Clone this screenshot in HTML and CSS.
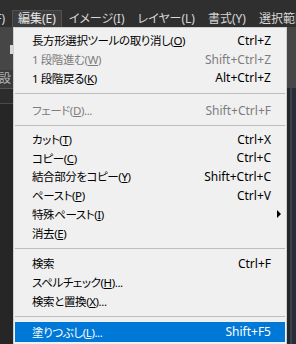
FILE: index.html
```html
<!DOCTYPE html>
<html lang="ja">
<head>
<meta charset="utf-8">
<link rel="stylesheet" href="styles.css">
</head>
<body>
<div class="app">
  <div class="menubar">
    <div class="bar-items">
      <span class="bar-item">ファイル(F)</span>
      <span class="bar-item active">編集(E)</span>
      <span class="bar-item">イメージ(I)</span>
      <span class="bar-item">レイヤー(L)</span>
      <span class="bar-item">書式(Y)</span>
      <span class="bar-item">選択範囲(S)</span>
    </div>
  </div>
  <div class="workspace">
    <div class="side-left">
      <div class="opt-strip"><span class="knob"></span></div>
      <div class="opt-label">設</div>
      <div class="ruler"></div>
    </div>
    <div class="side-right">
      <div class="opt-strip"></div>
      <div class="doc"></div>
    </div>
  </div>

  <div class="menu">
    <div class="item"><span class="label">長方形選択ツールの取り消し(<u>O</u>)</span><span class="key">Ctrl+Z</span></div>
    <div class="item disabled"><span class="label">1 段階進む(<u>W</u>)</span><span class="key">Shift+Ctrl+Z</span></div>
    <div class="item"><span class="label">1 段階戻る(<u>K</u>)</span><span class="key">Alt+Ctrl+Z</span></div>
    <div class="sep sep-a"></div>
    <div class="item disabled"><span class="label">フェード(<u>D</u>)...</span><span class="key">Shift+Ctrl+F</span></div>
    <div class="sep sep-b"></div>
    <div class="item"><span class="label">カット(<u>T</u>)</span><span class="key">Ctrl+X</span></div>
    <div class="item"><span class="label">コピー(<u>C</u>)</span><span class="key">Ctrl+C</span></div>
    <div class="item"><span class="label">結合部分をコピー(<u>Y</u>)</span><span class="key">Shift+Ctrl+C</span></div>
    <div class="item"><span class="label">ペースト(<u>P</u>)</span><span class="key">Ctrl+V</span></div>
    <div class="item"><span class="label">特殊ペースト(<u>I</u>)</span><span class="arrow"></span></div>
    <div class="item"><span class="label">消去(<u>E</u>)</span></div>
    <div class="sep sep-c"></div>
    <div class="item"><span class="label">検索</span><span class="key">Ctrl+F</span></div>
    <div class="item"><span class="label">スペルチェック(<u>H</u>)...</span></div>
    <div class="item"><span class="label">検索と置換(<u>X</u>)...</span></div>
    <div class="sep sep-d"></div>
    <div class="item selected"><span class="label">塗りつぶし(<u>L</u>)...</span><span class="key">Shift+F5</span></div>
  </div>
</div>
</body>
</html>
```

FILE: styles.css
```css
html, body {
  margin: 0;
  padding: 0;
  background: #262626;
}
body {
  width: 296px;
  height: 344px;
  overflow: hidden;
  font-family: "Noto Sans", "Noto Sans CJK JP", sans-serif;
  font-size: 12px;
  font-feature-settings: "palt";
}
.app {
  position: relative;
  width: 296px;
  height: 344px;
  display: flex;
  flex-direction: column;
}
.menubar {
  height: 27px;
  background: #2f2f2f;
  overflow: hidden;
  display: flex;
  align-items: flex-end;
}
.bar-items {
  display: flex;
  margin-left: -56px;
  white-space: nowrap;
}
.bar-item {
  color: #d8d8d8;
  padding: 0 5px;
  margin-right: 1px;
  height: 17px;
  line-height: 15px;
  box-sizing: border-box;
  border: 1px solid transparent;
  border-bottom: 0;
}
.bar-item.active {
  background: #3d3d3d;
  border-color: #505050;
  color: #e6e6e6;
}
.workspace {
  flex: 1;
  display: flex;
  justify-content: space-between;
}
.side-left {
  width: 13px;
  display: flex;
  flex-direction: column;
}
.side-right {
  width: 9px;
  display: flex;
  flex-direction: column;
}
.opt-strip {
  height: 43px;
  background: #464646;
  position: relative;
}
.knob {
  position: absolute;
  left: 10px;
  top: 18px;
  width: 3px;
  height: 9px;
  background: #d8d8d8;
}
.opt-label {
  height: 18px;
  background: #3a3a3a;
  color: #b4b4b4;
  font-size: 12px;
  line-height: 17px;
  text-indent: -1px;
  overflow: hidden;
  border-bottom: 1px solid #555;
}
.ruler {
  height: 15px;
  background: #2c2c2c;
  border-bottom: 1px solid #4a4a4a;
  box-sizing: border-box;
}
.side-right .opt-strip {
  height: 61px;
}
.doc {
  flex: 1;
  background: #272c36;
  border-left: 2px solid #39404f;
  margin-left: 3px;
}
.menu {
  position: absolute;
  left: 13px;
  top: 27px;
  width: 274px;
  height: 330px;
  box-sizing: border-box;
  background: #f0f0f0;
  border: 1px solid #cfcfcf;
  padding: 3px 1px 0 1px;
}
.item {
  height: 18.7px;
  display: flex;
  align-items: center;
  justify-content: space-between;
  padding: 0 14px 0 17px;
  color: #000;
  white-space: nowrap;
}
.label {
  font-size: 11.5px;
  letter-spacing: -0.4px;
}
.item u {
  text-decoration-thickness: 1px;
  text-underline-offset: 1px;
}
.item.disabled {
  color: #7d7d7d;
}
.item.selected {
  background: #0078d7;
  color: #fff;
  height: 20px;
}
.sep {
  height: 1px;
  background: #bcbcbc;
  margin: 6px 0 7px 0;
}
.sep-b {
  margin: 5px 0 4px 0;
}
.sep-c {
  margin: 6px 0 5px 0;
}
.sep-d {
  margin: 6px 0 5px 0;
}
.arrow {
  width: 0;
  height: 0;
  border-top: 4px solid transparent;
  border-bottom: 4px solid transparent;
  border-left: 4px solid #000;
  margin-right: -10px;
}
```
